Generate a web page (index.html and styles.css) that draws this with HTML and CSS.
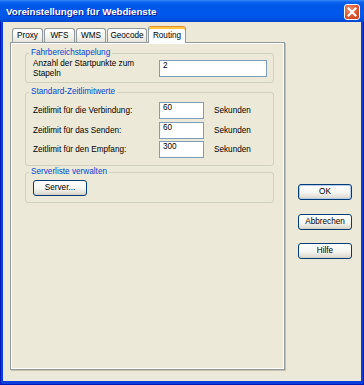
FILE: index.html
```html
<!DOCTYPE html>
<html lang="de">
<head>
<meta charset="utf-8">
<title>Voreinstellungen für Webdienste</title>
<link rel="stylesheet" href="styles.css">
</head>
<body>
<div class="window">
  <div class="titlebar">
    <span class="title">Voreinstellungen für Webdienste</span>
    <span class="close"><svg width="14" height="14" viewBox="0 0 14 14"><path d="M3.5 3.5 L10.5 10.5 M10.5 3.5 L3.5 10.5" stroke="#fff" stroke-width="2" stroke-linecap="square"/></svg></span>
  </div>
  <div class="client">
    <div class="tabs-area">
      <div class="tabstrip">
        <div class="tab t-proxy">Proxy</div>
        <div class="tab t-wfs">WFS</div>
        <div class="tab t-wms">WMS</div>
        <div class="tab t-geocode">Geocode</div>
        <div class="tab t-routing active">Routing</div>
      </div>
      <div class="panel">
        <fieldset class="group g1">
          <legend>Fahrbereichstapelung</legend>
          <div class="body1">
            <span class="lbl2">Anzahl der Startpunkte zum<br>Stapeln</span>
            <input class="field wide" value="2" readonly>
          </div>
        </fieldset>
        <fieldset class="group g2">
          <legend>Standard-Zeitlimitwerte</legend>
          <div class="body2">
            <span class="lbl">Zeitlimit für die Verbindung:</span><input class="field short" value="60" readonly><span class="unit">Sekunden</span>
            <span class="lbl">Zeitlimit für das Senden:</span><input class="field short" value="60" readonly><span class="unit">Sekunden</span>
            <span class="lbl">Zeitlimit für den Empfang:</span><input class="field short" value="300" readonly><span class="unit">Sekunden</span>
          </div>
        </fieldset>
        <fieldset class="group g3">
          <legend>Serverliste verwalten</legend>
          <div class="body3">
            <button class="btn">Server...</button>
          </div>
        </fieldset>
      </div>
    </div>
    <div class="buttons">
      <button class="btn default">OK</button>
      <button class="btn">Abbrechen</button>
      <button class="btn">Hilfe</button>
    </div>
  </div>
</div>
</body>
</html>
```
FILE: styles.css
```css
html, body {
  margin: 0;
  padding: 0;
}
body {
  width: 364px;
  height: 385px;
  overflow: hidden;
  font-family: "Liberation Sans", Arial, sans-serif;
  font-size: 8.2px;
  color: #000;
}
.window {
  width: 364px;
  height: 385px;
  display: flex;
  flex-direction: column;
  background: #0B3EDC;
  box-shadow: inset 1px 0 0 #0019B8, inset -1px 0 0 #0019B8, inset 0 -1px 0 #0019B8;
}
.titlebar {
  height: 22px;
  flex: none;
  display: flex;
  align-items: center;
  padding: 0 4px 0 6px;
  background: linear-gradient(180deg, #3A8CF8 0px, #0A62EE 2px, #0056E6 6px, #0059EF 14px, #0052E3 19px, #0045CE 22px);
}
.title {
  flex: 1;
  color: #fff;
  font-weight: bold;
  font-size: 9.7px;
  padding-top: 1px;
  text-shadow: 1px 1px 0 #0A1C8C;
}
.close {
  box-sizing: border-box;
  width: 16px;
  height: 16px;
  margin-top: 2px;
  border: 1px solid #fff;
  border-radius: 3px;
  background: radial-gradient(circle at 35% 30%, #EE8A6C 0%, #D9532C 60%, #C2401C 100%);
  display: flex;
  align-items: center;
  justify-content: center;
}
.client {
  flex: 1;
  margin: 0 3px 4px 3px;
  background: #ECE9D8;
  display: flex;
  padding: 4px 9px 0 7px;
}
.tabs-area {
  display: flex;
  flex-direction: column;
}
.tabstrip {
  display: flex;
  align-items: flex-end;
  height: 16px;
  padding-left: 2px;
}
.tab {
  box-sizing: border-box;
  height: 14px;
  margin-right: 1px;
  border: 1px solid #919B9C;
  border-bottom: none;
  border-radius: 3px 3px 0 0;
  background: linear-gradient(#FFFFFF, #F3F3EF 60%, #E6E4DA);
  text-align: center;
  line-height: 13px;
}
.t-proxy { width: 31px; }
.t-wfs { width: 31px; }
.t-wms { width: 30px; }
.t-geocode { width: 40px; }
.t-routing { width: 38px; }
.tab.active {
  height: 17px;
  margin-bottom: -1px;
  position: relative;
  z-index: 1;
  border-top: 1px solid #E68B2C;
  background: #FCFCFE;
  box-shadow: inset 0 2px 0 #FFC73C;
  line-height: 17px;
}
.panel {
  box-sizing: border-box;
  width: 275px;
  height: 328px;
  border: 1px solid #919B9C;
  background: #ECE9D8;
  box-shadow: inset 0 0 0 1px #fff, 1px 1px 0 #C5C2B2;
  padding: 5px 10px 0 14px;
}
.group {
  margin: 0;
  padding: 0;
  min-inline-size: 0;
  border: 1px solid #D0D0BF;
  border-radius: 3px;
}
.group legend {
  padding: 0 2px;
  margin-left: 3px;
  line-height: 10px;
  color: #0046D5;
}
.g2 { margin-top: 4px; }
.g3 { margin-top: 1px; }
.body1 {
  display: grid;
  grid-template-columns: 126px 108px;
  align-items: center;
  padding: 1px 0 4px 7px;
}
.lbl2 {
  line-height: 9.5px;
}
.body2 {
  display: grid;
  grid-template-columns: 126px 45px auto;
  grid-auto-rows: 17px;
  row-gap: 2.5px;
  align-items: center;
  padding: 5px 0 7px 7px;
}
.unit {
  margin-left: 10px;
}
.body3 {
  padding: 3px 0 6px 7px;
}
.field {
  box-sizing: border-box;
  height: 17px;
  margin: 0;
  border: 1px solid #7F9DB9;
  background: #fff;
  padding: 0 3px 6px 3px;
  font: inherit;
  color: #000;
  outline: none;
}
.wide { width: 108px; }
.short { width: 45px; }
.btn {
  box-sizing: border-box;
  width: 54px;
  height: 16px;
  margin: 0;
  padding: 0;
  border: 1px solid #003C74;
  border-radius: 3px;
  background: linear-gradient(#FFFFFF, #F4F4F0 55%, #E3E0D6 85%, #D6D0C5);
  font: inherit;
  color: #000;
  line-height: 14px;
}
.btn.default {
  box-shadow: inset 0 0 0 1px #B4CBF2;
}
.buttons {
  display: flex;
  flex-direction: column;
  gap: 13.5px;
  margin-left: 13px;
  padding-top: 158px;
}
```
